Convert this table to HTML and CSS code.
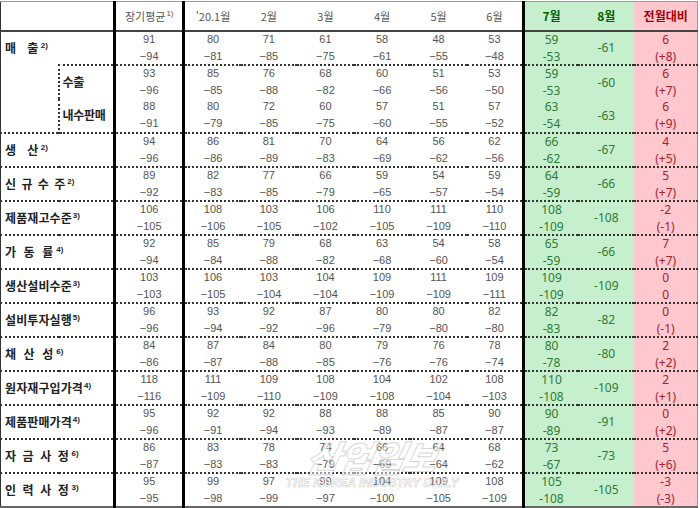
FILE: index.html
```html
<!DOCTYPE html>
<html lang="ko">
<head>
<meta charset="utf-8">
<title>업황 BSI</title>
<link rel="stylesheet" href="styles.css">
</head>
<body>
<div class="sheet">
<table class="bsi">
<colgroup>
<col class="c-lab1"><col class="c-lab2"><col class="c-avg">
<col class="c-m"><col class="c-m2"><col class="c-m"><col class="c-m2"><col class="c-m"><col class="c-m2">
<col class="c-jul"><col class="c-aug"><col class="c-diff">
</colgroup>
<thead>
<tr>
<th colspan="2" class="lab"></th>
<th class="avg">장기평균<sup>1)</sup></th>
<th>'20.1월</th><th>2월</th><th>3월</th><th>4월</th><th>5월</th><th>6월</th>
<th class="jul">7월</th><th class="aug">8월</th><th class="diff">전월대비</th>
</tr>
</thead>
<tbody>
<tr class="first">
<th colspan="2" class="lab s22">매&nbsp;&nbsp;출<sup>2)</sup></th>
<td class="avg"><span>91</span><span>−94</span></td>
<td><span>80</span><span>−81</span></td><td><span>71</span><span>−85</span></td><td><span>61</span><span>−75</span></td>
<td><span>58</span><span>−61</span></td><td><span>48</span><span>−55</span></td><td><span>53</span><span>−48</span></td>
<td class="jul"><span>59</span><span>-53</span></td><td class="aug">-61</td><td class="diff"><span>6</span><span>(+8)</span></td>
</tr>
<tr>
<td rowspan="2" class="blank"></td>
<th class="sub">수출</th>
<td class="avg"><span>93</span><span>−96</span></td>
<td><span>85</span><span>−85</span></td><td><span>76</span><span>−88</span></td><td><span>68</span><span>−82</span></td>
<td><span>60</span><span>−66</span></td><td><span>51</span><span>−56</span></td><td><span>53</span><span>−50</span></td>
<td class="jul"><span>59</span><span>-53</span></td><td class="aug">-60</td><td class="diff"><span>6</span><span>(+7)</span></td>
</tr>
<tr class="cont">
<th class="sub">내수판매</th>
<td class="avg"><span>88</span><span>−91</span></td>
<td><span>80</span><span>−79</span></td><td><span>72</span><span>−85</span></td><td><span>60</span><span>−75</span></td>
<td><span>57</span><span>−60</span></td><td><span>51</span><span>−55</span></td><td><span>57</span><span>−52</span></td>
<td class="jul"><span>63</span><span>-54</span></td><td class="aug">-63</td><td class="diff"><span>6</span><span>(+9)</span></td>
</tr>
<tr>
<th colspan="2" class="lab s22">생&nbsp;&nbsp;산<sup>2)</sup></th>
<td class="avg"><span>94</span><span>−96</span></td>
<td><span>86</span><span>−86</span></td><td><span>81</span><span>−89</span></td><td><span>70</span><span>−83</span></td>
<td><span>64</span><span>−69</span></td><td><span>56</span><span>−62</span></td><td><span>62</span><span>−56</span></td>
<td class="jul"><span>66</span><span>-62</span></td><td class="aug">-67</td><td class="diff"><span>4</span><span>(+5)</span></td>
</tr>
<tr>
<th colspan="2" class="lab s17">신&nbsp;규&nbsp;수&nbsp;주<sup>2)</sup></th>
<td class="avg"><span>89</span><span>−92</span></td>
<td><span>82</span><span>−83</span></td><td><span>77</span><span>−85</span></td><td><span>66</span><span>−79</span></td>
<td><span>59</span><span>−65</span></td><td><span>54</span><span>−57</span></td><td><span>59</span><span>−54</span></td>
<td class="jul"><span>64</span><span>-59</span></td><td class="aug">-66</td><td class="diff"><span>5</span><span>(+7)</span></td>
</tr>
<tr>
<th colspan="2" class="lab">제품재고수준<sup>3)</sup></th>
<td class="avg"><span>106</span><span>−105</span></td>
<td><span>108</span><span>−106</span></td><td><span>103</span><span>−105</span></td><td><span>106</span><span>−102</span></td>
<td><span>110</span><span>−105</span></td><td><span>111</span><span>−109</span></td><td><span>110</span><span>−110</span></td>
<td class="jul"><span>108</span><span>-109</span></td><td class="aug">-108</td><td class="diff"><span>-2</span><span>(-1)</span></td>
</tr>
<tr>
<th colspan="2" class="lab s19">가&nbsp;동&nbsp;률<sup>4)</sup></th>
<td class="avg"><span>92</span><span>−94</span></td>
<td><span>85</span><span>−84</span></td><td><span>79</span><span>−88</span></td><td><span>68</span><span>−82</span></td>
<td><span>63</span><span>−68</span></td><td><span>54</span><span>−60</span></td><td><span>58</span><span>−54</span></td>
<td class="jul"><span>65</span><span>-59</span></td><td class="aug">-66</td><td class="diff"><span>7</span><span>(+7)</span></td>
</tr>
<tr>
<th colspan="2" class="lab">생산설비수준<sup>3)</sup></th>
<td class="avg"><span>103</span><span>−103</span></td>
<td><span>106</span><span>−105</span></td><td><span>103</span><span>−104</span></td><td><span>104</span><span>−104</span></td>
<td><span>109</span><span>−109</span></td><td><span>111</span><span>−109</span></td><td><span>109</span><span>−111</span></td>
<td class="jul"><span>109</span><span>-109</span></td><td class="aug">-109</td><td class="diff"><span>0</span><span>0</span></td>
</tr>
<tr>
<th colspan="2" class="lab">설비투자실행<sup>5)</sup></th>
<td class="avg"><span>96</span><span>−96</span></td>
<td><span>93</span><span>−94</span></td><td><span>92</span><span>−92</span></td><td><span>87</span><span>−96</span></td>
<td><span>80</span><span>−79</span></td><td><span>80</span><span>−80</span></td><td><span>82</span><span>−80</span></td>
<td class="jul"><span>82</span><span>-83</span></td><td class="aug">-82</td><td class="diff"><span>0</span><span>(-1)</span></td>
</tr>
<tr>
<th colspan="2" class="lab s19">채&nbsp;산&nbsp;성<sup>6)</sup></th>
<td class="avg"><span>84</span><span>−86</span></td>
<td><span>87</span><span>−87</span></td><td><span>84</span><span>−88</span></td><td><span>80</span><span>−85</span></td>
<td><span>79</span><span>−76</span></td><td><span>76</span><span>−76</span></td><td><span>78</span><span>−74</span></td>
<td class="jul"><span>80</span><span>-78</span></td><td class="aug">-80</td><td class="diff"><span>2</span><span>(+2)</span></td>
</tr>
<tr>
<th colspan="2" class="lab">원자재구입가격<sup>4)</sup></th>
<td class="avg"><span>118</span><span>−116</span></td>
<td><span>111</span><span>−109</span></td><td><span>109</span><span>−110</span></td><td><span>108</span><span>−109</span></td>
<td><span>104</span><span>−108</span></td><td><span>102</span><span>−104</span></td><td><span>108</span><span>−103</span></td>
<td class="jul"><span>110</span><span>-108</span></td><td class="aug">-109</td><td class="diff"><span>2</span><span>(+1)</span></td>
</tr>
<tr>
<th colspan="2" class="lab">제품판매가격<sup>4)</sup></th>
<td class="avg"><span>95</span><span>−96</span></td>
<td><span>92</span><span>−91</span></td><td><span>92</span><span>−94</span></td><td><span>88</span><span>−93</span></td>
<td><span>88</span><span>−89</span></td><td><span>85</span><span>−87</span></td><td><span>90</span><span>−87</span></td>
<td class="jul"><span>90</span><span>-89</span></td><td class="aug">-91</td><td class="diff"><span>0</span><span>(+2)</span></td>
</tr>
<tr>
<th colspan="2" class="lab s18">자&nbsp;금&nbsp;사&nbsp;정<sup>6)</sup></th>
<td class="avg"><span>86</span><span>−87</span></td>
<td><span>83</span><span>−83</span></td><td><span>78</span><span>−83</span></td><td><span>74</span><span>−79</span></td>
<td><span>66</span><span>−69</span></td><td><span>64</span><span>−64</span></td><td><span>68</span><span>−62</span></td>
<td class="jul"><span>73</span><span>-67</span></td><td class="aug">-73</td><td class="diff"><span>5</span><span>(+6)</span></td>
</tr>
<tr>
<th colspan="2" class="lab s18">인&nbsp;력&nbsp;사&nbsp;정<sup>3)</sup></th>
<td class="avg"><span>95</span><span>−95</span></td>
<td><span>99</span><span>−98</span></td><td><span>97</span><span>−99</span></td><td><span>99</span><span>−97</span></td>
<td><span>104</span><span>−100</span></td><td><span>109</span><span>−105</span></td><td><span>108</span><span>−109</span></td>
<td class="jul"><span>105</span><span>-108</span></td><td class="aug">-105</td><td class="diff"><span>-3</span><span>(-3)</span></td>
</tr>
</tbody>
</table>
<div class="watermark" aria-hidden="true">
<div class="wm-ko">산업일보</div>
<div class="wm-en">THE KOREA INDUSTRY DAILY</div>
</div>
</div>
</body>
</html>
```

FILE: styles.css
```css
html, body {
  margin: 0;
  padding: 0;
  background: #ffffff;
}

.sheet {
  position: relative;
  width: 700px;
  height: 508px;
  padding-top: 1px;
  box-sizing: border-box;
  overflow: hidden;
}

.bsi {
  border-collapse: collapse;
  table-layout: fixed;
  width: 698px;
  border-top: 1px solid #9a9a9a;
  border-left: 1px solid #333333;
  border-right: 1px solid #9a9a9a;
  border-bottom: 3px solid #666666;
  font-family: "Liberation Sans", "Noto Sans CJK KR", sans-serif;
}

.c-lab1 { width: 58px; }
.c-lab2 { width: 56px; }
.c-avg { width: 69px; }
.c-m { width: 57px; }
.c-m2 { width: 56px; }
.c-jul { width: 55px; }
.c-aug { width: 56px; }
.c-diff { width: 63px; }

.bsi thead tr { height: 29px; }
.bsi tbody tr { height: 34px; }
.bsi tbody tr.first { height: 32px; }

.bsi th,
.bsi td {
  padding: 0;
}

.bsi thead th {
  font-family: "Noto Sans CJK KR", sans-serif;
  font-weight: 400;
  font-size: 11px;
  line-height: 16px;
  color: #555555;
  text-align: center;
  vertical-align: middle;
  border-bottom: 2px solid #444444;
}

.bsi thead th sup,
.bsi tbody th sup {
  font-size: 8px;
  line-height: 0;
  vertical-align: 5px;
  letter-spacing: 0;
  margin-left: 1px;
  font-family: "Liberation Sans", sans-serif;
}

.bsi thead th.jul,
.bsi thead th.aug {
  font-weight: 700;
  font-size: 12px;
  color: #006100;
}

.bsi thead th.diff {
  font-weight: 700;
  font-size: 12px;
  color: #9c0006;
}

.bsi tbody th,
.bsi tbody td {
  border-top: 2px dotted #333333;
}

.bsi tbody tr.first th,
.bsi tbody tr.first td {
  border-top: none;
}

.bsi tbody tr.cont th,
.bsi tbody tr.cont td {
  border-top: none;
}

.bsi tbody td.blank {
  border-top: none;
}

.bsi tbody th.lab {
  font-family: "Noto Sans CJK KR", sans-serif;
  font-weight: 700;
  font-size: 12px;
  line-height: 16px;
  letter-spacing: 0.1px;
  color: #222222;
  text-align: left;
  vertical-align: middle;
  padding-left: 4px;
  white-space: nowrap;
}

.bsi tbody th.lab.s22 { letter-spacing: 1.5px; }
.bsi tbody th.lab.s19 { letter-spacing: 2.1px; }
.bsi tbody th.lab.s18 { letter-spacing: 1.6px; }
.bsi tbody th.lab.s17 { letter-spacing: 1px; }

.bsi tbody th.sub {
  font-family: "Noto Sans CJK KR", sans-serif;
  font-weight: 700;
  font-size: 12px;
  line-height: 16px;
  letter-spacing: -0.3px;
  color: #222222;
  text-align: left;
  vertical-align: middle;
  padding-left: 3px;
  border-left: 2px dotted #333333;
  white-space: nowrap;
}

.bsi td {
  font-size: 11px;
  line-height: 15px;
  color: #555555;
  text-align: center;
  vertical-align: middle;
}

.bsi td span {
  display: block;
}

.bsi td span:first-child {
  margin-bottom: 2px;
}

.bsi .avg {
  border-left: 3px solid #000000;
  border-right: 3px solid #000000;
}

.bsi .jul {
  border-left: 3px solid #000000;
}

.bsi .jul,
.bsi .aug {
  background: #c6efce;
}

.bsi .diff {
  background: #ffc7ce;
}

.bsi td.jul,
.bsi td.aug,
.bsi td.diff {
  font-family: "Noto Sans", "Open Sans", sans-serif;
  font-size: 12px;
}

.bsi td.jul,
.bsi td.aug {
  color: #2f7a33;
}

.bsi td.diff {
  color: #a4242c;
}

.watermark {
  position: absolute;
  left: 282px;
  top: 436px;
  width: 180px;
  text-align: center;
  pointer-events: none;
}

.wm-ko {
  font-family: "Noto Sans CJK KR", sans-serif;
  font-weight: 900;
  font-style: italic;
  font-size: 36px;
  line-height: 40px;
  letter-spacing: -1px;
  color: rgba(255, 255, 255, 0.5);
  -webkit-text-stroke: 1px rgba(110, 110, 110, 0.3);
  transform: skewX(-12deg);
}

.wm-en {
  font-family: "Liberation Sans", sans-serif;
  font-weight: 700;
  font-style: italic;
  font-size: 12px;
  line-height: 14px;
  color: rgba(255, 255, 255, 0.7);
  -webkit-text-stroke: 0.6px rgba(120, 120, 120, 0.4);
  white-space: nowrap;
}
```
